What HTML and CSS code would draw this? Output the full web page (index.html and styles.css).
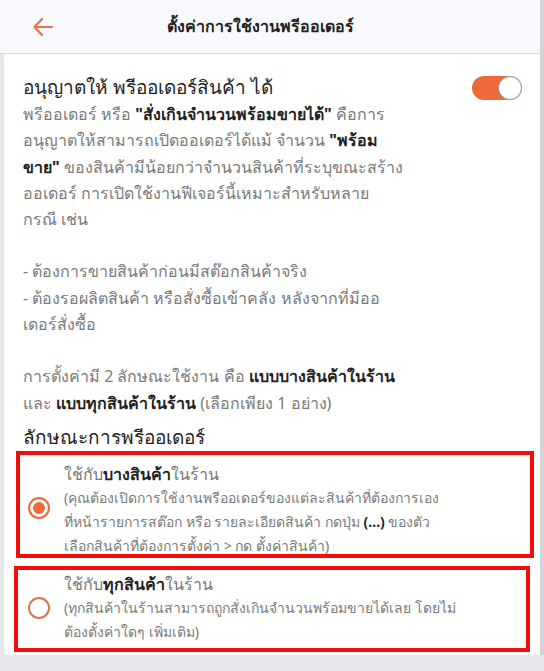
FILE: index.html
```html
<!DOCTYPE html>
<html lang="th">
<head>
  <meta charset="UTF-8">
  <meta name="viewport" content="width=device-width, initial-scale=1">
  <title>ตั้งค่าการใช้งานพรีออเดอร์</title>
  <link rel="stylesheet" href="styles.css">
</head>
<body>
<div class="app">
  <div class="header">
    <span class="back">
      <svg width="22" height="20" viewBox="0 0 22 20"><path d="M20 10H3M10 2L2.5 10 10 18" fill="none" stroke="#e8734a" stroke-width="2.2" stroke-linecap="round" stroke-linejoin="round"/></svg>
    </span>
    <h1>ตั้งค่าการใช้งานพรีออเดอร์</h1>
  </div>

  <div class="panel">
    <div class="setting">
      <div class="setting-text">
        <h2>อนุญาตให้ พรีออเดอร์สินค้า ได้</h2>
        <p class="desc">พรีออเดอร์ หรือ <b>"สั่งเกินจำนวนพร้อมขายได้"</b> คือการ<br>อนุญาตให้สามารถเปิดออเดอร์ได้แม้ จำนวน <b>"พร้อม<br>ขาย"</b> ของสินค้ามีน้อยกว่าจำนวนสินค้าที่ระบุขณะสร้าง<br>ออเดอร์ การเปิดใช้งานฟีเจอร์นี้เหมาะสำหรับหลาย<br>กรณี เช่น</p>
        <p class="desc">- ต้องการขายสินค้าก่อนมีสต๊อกสินค้าจริง<br>- ต้องรอผลิตสินค้า หรือสั่งซื้อเข้าคลัง หลังจากที่มีออ<br>เดอร์สั่งซื้อ</p>
        <p class="desc">การตั้งค่ามี 2 ลักษณะใช้งาน คือ <b>แบบบางสินค้าในร้าน</b><br>และ <b>แบบทุกสินค้าในร้าน</b> (เลือกเพียง 1 อย่าง)</p>
      </div>
      <span class="toggle on"><span class="knob"></span></span>
    </div>

    <h2 class="group-title">ลักษณะการพรีออเดอร์</h2>

    <div class="option first">
      <span class="radio checked"></span>
      <div class="option-text">
        <div class="option-title">ใช้กับ<b>บางสินค้า</b>ในร้าน</div>
        <div class="option-desc">(คุณต้องเปิดการใช้งานพรีออเดอร์ของแต่ละสินค้าที่ต้องการเอง<br>ที่หน้ารายการสต๊อก หรือ รายละเอียดสินค้า กดปุ่ม <b>(...)</b> ของตัว<br>เลือกสินค้าที่ต้องการตั้งค่า &gt; กด ตั้งค่าสินค้า)</div>
      </div>
    </div>

    <div class="option second">
      <span class="radio"></span>
      <div class="option-text">
        <div class="option-title">ใช้กับ<b>ทุกสินค้า</b>ในร้าน</div>
        <div class="option-desc">(ทุกสินค้าในร้านสามารถถูกสั่งเกินจำนวนพร้อมขายได้เลย โดยไม่<br>ต้องตั้งค่าใดๆ เพิ่มเติม)</div>
      </div>
    </div>
  </div>
</div>
</body>
</html>
```

FILE: styles.css
```css
body { margin: 0; background: #e6e7ea; font-family: "Noto Sans", "Liberation Sans", sans-serif; color: #222; }
.app { width: 540px; border-right: 4px solid #d3d4d8; }
.header { height: 53px; display: flex; align-items: center; background: #f8f9fc; border-bottom: 1px solid #d9dbe0; padding: 0 0 0 32px; }
.back { display: flex; width: 22px; }
.header h1 { flex: 1; margin: 0; padding-right: 74px; text-align: center; font-size: 16px; font-weight: 600; color: #222; }
.panel { background: #fff; margin-left: 3px; border-left: 1px solid #e2e3e6; padding: 19px 6px 3px 10px; }
.setting { display: flex; align-items: flex-start; padding-left: 9px; }
.setting-text { width: 400px; }
.setting h2, .group-title { margin: 0; font-size: 19px; font-weight: normal; line-height: 28px; color: #222; }
.desc { margin: 0 0 26px; font-size: 16px; line-height: 26.3px; color: #7a7a7a; }
.desc:last-child { margin-bottom: 7px; }
.desc b { color: #222; }
.toggle { margin: 3px 12px 0 auto; width: 50px; height: 24px; border-radius: 12px; background: #f0693a; position: relative; flex-shrink: 0; }
.toggle .knob { position: absolute; right: 0; top: 0; width: 22px; height: 22px; border-radius: 50%; background: #fff; border: 1px solid #9a9a9a; }
.group-title { padding-left: 9px; }
.option { display: flex; align-items: center; border: 4px solid #f20c0c; box-sizing: border-box; }
.option.first { margin: 0 0 8px 2px; padding: 12px 8px 0 8px; height: 107px; }
.option.second { margin: 0 4px 0 0; padding: 0 8px 2px 10px; height: 86px; }
.radio { width: 18px; height: 18px; border-radius: 50%; border: 2px solid #d4774f; flex-shrink: 0; margin-right: 14px; background: #fff; }
.radio.checked { border-color: #f0693a; box-shadow: inset 0 0 0 3px #fff, inset 0 0 0 9px #f0693a; }
.option.first .radio { margin-top: -4px; }
.option-title { font-size: 16px; line-height: 24px; color: #777; }
.option-title b { color: #222; }
.option-desc { font-size: 14px; line-height: 24px; color: #7a7a7a; }
.option-desc b { color: #222; }
```
